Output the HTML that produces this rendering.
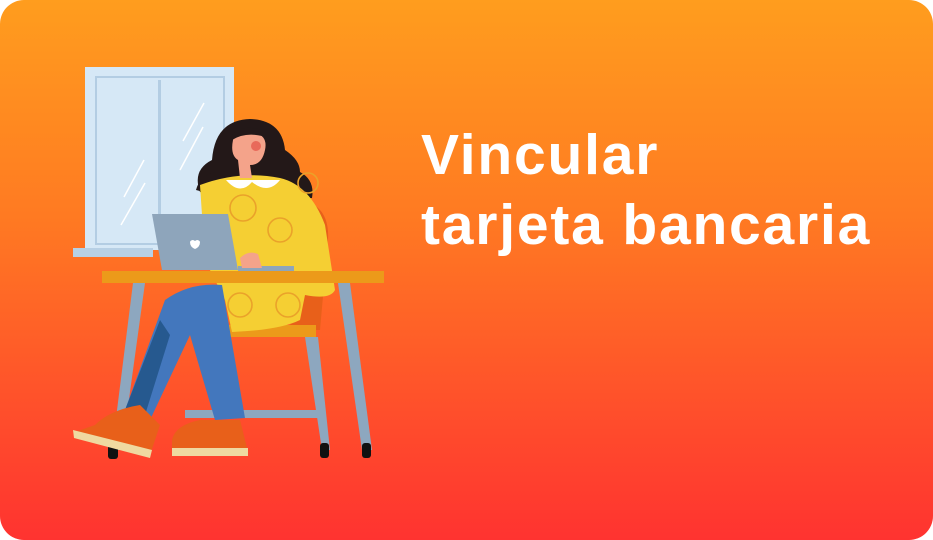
<!DOCTYPE html>
<html><head><meta charset="utf-8"><style>
html,body{margin:0;padding:0;background:#fff;}
.card{position:relative;width:933px;height:540px;border-radius:24px;overflow:hidden;
background:linear-gradient(180deg,#ff9d1e 0%,#ff7a22 40%,#ff4a2c 80%,#ff3330 100%);}
.t{position:absolute;left:421px;color:#fff;font-family:"Liberation Sans",sans-serif;font-weight:bold;font-size:57px;letter-spacing:1.8px;white-space:nowrap;line-height:1}
svg{position:absolute;left:0;top:0}
</style></head><body>
<div class="card">
<svg width="933" height="540" viewBox="0 0 933 540">
<rect x="85" y="67" width="149" height="183" fill="#d6e8f6"/>
<rect x="96" y="77" width="128" height="167" fill="none" stroke="#b3cde3" stroke-width="2"/>
<rect x="158" y="80" width="3" height="162" fill="#b3cde3"/>
<rect x="73" y="248" width="80" height="9" fill="#b7d0e5"/>
<line x1="124" y1="197" x2="144" y2="160" stroke="#fff" stroke-width="1.5"/>
<line x1="121" y1="225" x2="145" y2="183" stroke="#fff" stroke-width="1.5"/>
<line x1="183" y1="141" x2="204" y2="103" stroke="#fff" stroke-width="1.5"/>
<line x1="180" y1="170" x2="203" y2="127" stroke="#fff" stroke-width="1.5"/>
<path d="M300 200 Q330 205 328 240 L320 330 L290 330 Z" fill="#e8601a"/>
<rect x="220" y="325" width="96" height="12" fill="#ec9a1a"/>
<path d="M305 337 L318 337 L330 450 L322 450 Z" fill="#8da7bf"/>
<rect x="185" y="410" width="135" height="8" fill="#8da7bf"/>
<rect x="320" y="443" width="9" height="15" rx="3" fill="#111"/>
<path d="M133 283 L145 283 L122 450 L112 450 Z" fill="#8da7bf"/>
<path d="M338 283 L350 283 L372 450 L362 450 Z" fill="#8da7bf"/>
<rect x="108" y="445" width="10" height="14" rx="3" fill="#111"/>
<rect x="362" y="443" width="9" height="15" rx="3" fill="#111"/>
<!-- hair -->
<path d="M200 192 Q192 170 212 160 Q215 120 250 119 Q282 120 285 150 Q300 160 300 172 Q315 180 312 198 L270 200 L220 200 Z" fill="#231818"/>
<path d="M196 190 Q200 175 215 172 L215 195 Z" fill="#231818"/>
<path d="M200 185 Q240 170 280 178 Q310 185 325 225 L335 290 Q330 300 305 295 L300 320 Q280 330 232 332 L225 300 L205 260 Z" fill="#f5cf33"/>
<circle cx="243" cy="208" r="13" fill="none" stroke="#eaa22a" stroke-width="1.6"/>
<circle cx="280" cy="230" r="12" fill="none" stroke="#eaa22a" stroke-width="1.6"/>
<circle cx="240" cy="305" r="12" fill="none" stroke="#eaa22a" stroke-width="1.6"/>
<circle cx="288" cy="305" r="12" fill="none" stroke="#eaa22a" stroke-width="1.6"/>
<circle cx="308" cy="183" r="10" fill="none" stroke="#eaa22a" stroke-width="1.6"/>
<path d="M233 140 Q235 130 255 133 Q268 136 265 150 Q262 165 250 165 L252 178 L240 178 L238 160 Q230 155 233 140Z" fill="#f4a38a"/>
<path d="M232 135 Q240 124 262 130 L262 136 Q245 132 232 140Z" fill="#231818"/>
<circle cx="256" cy="146" r="5" fill="#e86a5a"/>
<path d="M226 180 Q240 196 252 182 Q268 195 280 180 Z" fill="#fff"/>
<path d="M152 214 L228 214 L238 270 L162 270 Z" fill="#8ea5bb"/>
<rect x="238" y="266" width="56" height="5" fill="#8ea5bb"/>
<path d="M190 242 a3 3 0 0 1 5 -1 a3 3 0 0 1 5 1 q0 5 -5 7 q-5 -2 -5 -7z" fill="#fff"/>
<path d="M240 258 Q248 250 258 254 L262 268 L242 268 Z" fill="#f4a38a"/>
<rect x="102" y="271" width="282" height="12" fill="#ec9a1a"/>
<path d="M165 300 Q190 282 222 285 L245 418 L215 420 L190 335 L150 420 L125 410 Z" fill="#4377bd"/>
<path d="M160 320 L170 335 L145 415 L125 410 Z" fill="#26598f"/>
<path d="M95 425 Q110 410 140 405 L160 425 L150 455 L75 432 Z" fill="#e8601a"/>
<path d="M73 430 L152 450 L150 458 L74 438 Z" fill="#efd9a0"/>
<path d="M172 440 Q175 425 200 420 L240 420 L247 448 L172 450 Z" fill="#e8601a"/>
<rect x="172" y="448" width="76" height="8" fill="#efd9a0"/>
</svg>
<div class="t" style="top:127px">Vincular</div>
<div class="t" style="top:197px">tarjeta bancaria</div>
</div>
</body></html>
